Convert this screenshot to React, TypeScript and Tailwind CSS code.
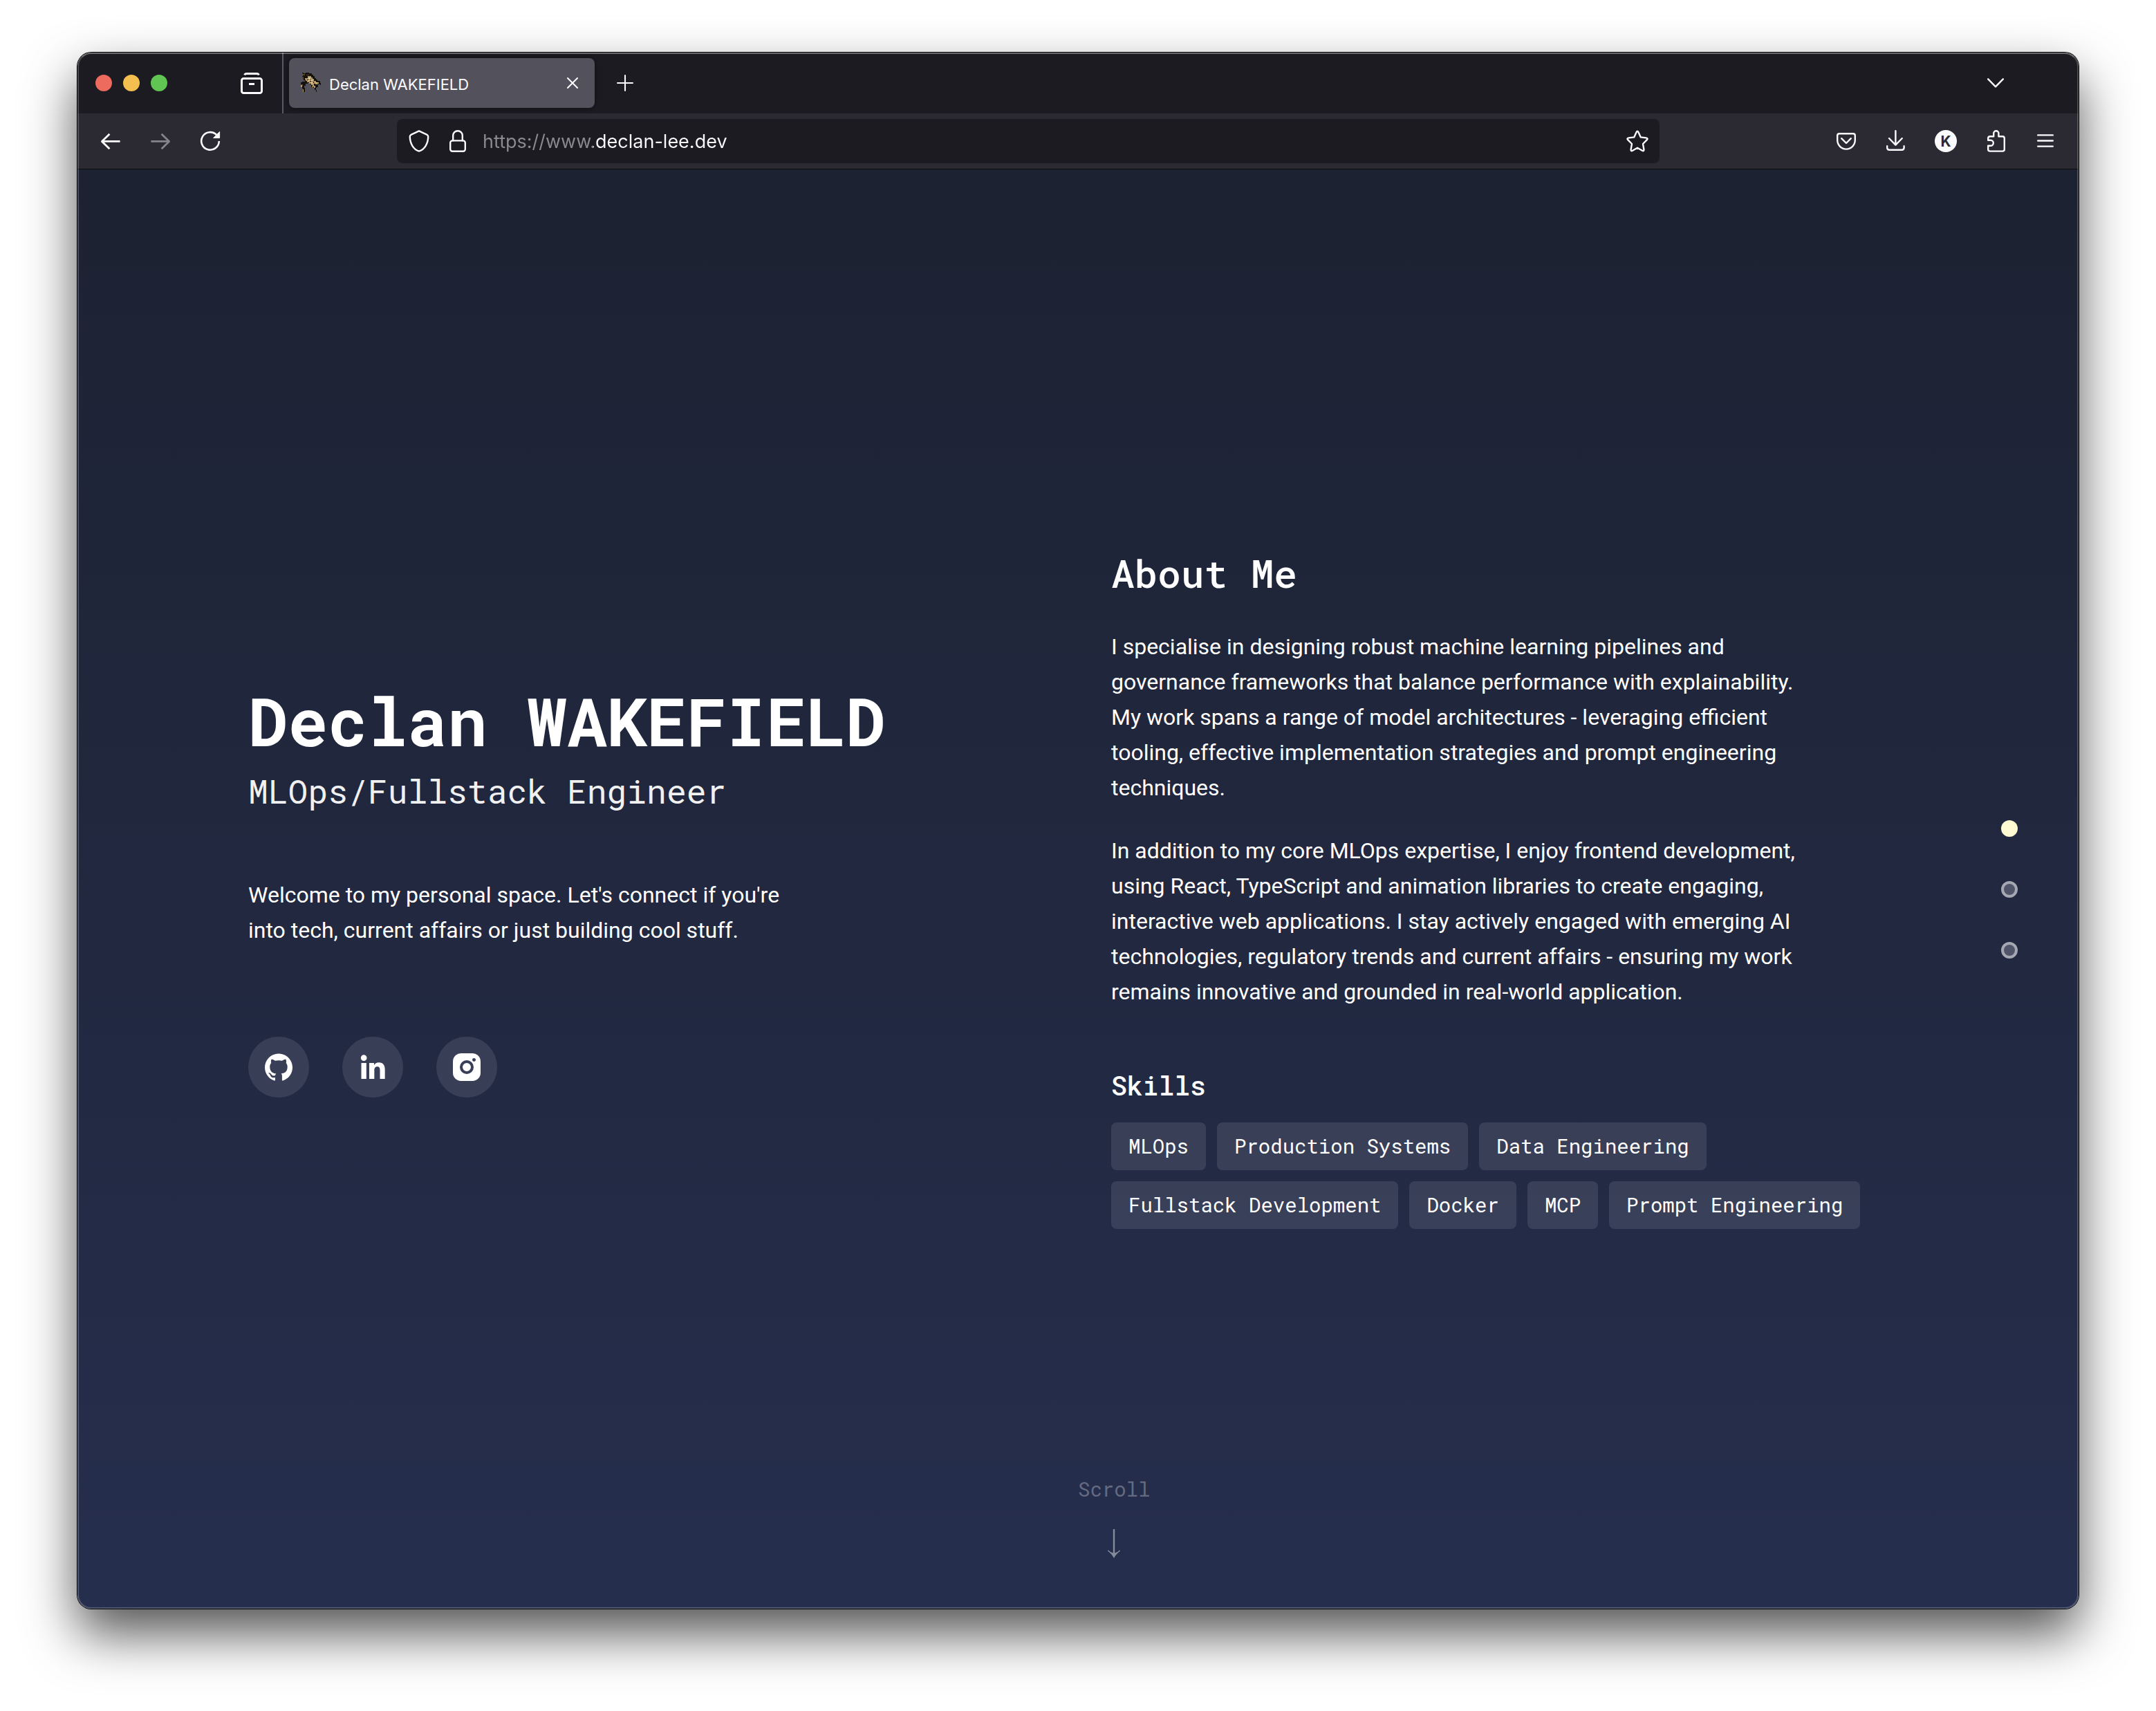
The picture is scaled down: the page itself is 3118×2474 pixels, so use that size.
import type { ReactNode } from "react";

const mono = "font-['Roboto_Mono','DejaVu_Sans_Mono',monospace]";

function Icon({ children, width = 1.2, className = "size-8" }: { children: ReactNode; width?: number; className?: string }) {
  return (
    <svg
      viewBox="0 0 16 16"
      className={className}
      fill="none"
      stroke="currentColor"
      strokeWidth={width}
      strokeLinecap="round"
      strokeLinejoin="round"
      aria-hidden="true"
    >
      {children}
    </svg>
  );
}

function Favicon() {
  return (
    <svg viewBox="0 0 32 32" className="size-8 shrink-0" shapeRendering="crispEdges" aria-hidden="true">
      <path
        fill="#14120c"
        d="M5 1h2v1h3v-1h5v1h4v2h2v2h2v3h2v2h2v2h4v3h2v3h-2v-1h-4v1h1v3h-2v1h-1v3h1v3h-1v-3h-2v-3h-3v-2h-2v-3h-2v-2h-3v1h-3v3h-2v3h1v6h-3v-4h-1v-3h-1v-4h-1v-3h2v-1h4v-2h-2v-2h-2v-4h1v-2h1z"
      />
      <path fill="#5b4526" d="M6 3h3v2h-3zM11 4h4v1h-4zM5 7h2v3h-2zM9 9h3v1h-3zM3 18h3v2h-3zM5 24h1v4h-1zM18 21h3v2h-3z" />
      <path
        fill="#b89a66"
        d="M13 6h5v2h2v2h2v3h3v2h4v2h-2v1h-3v-1h-2v3h2v3h-2v-2h-2v-2h-2v-2h-3v-2h-3v-2h-2v-2h-1v-2h4zM3 19h2v3h-2zM6 25h1v4h-1z"
      />
      <path fill="#e2cf9f" d="M14 8h3v2h-3zM18 11h2v2h-2zM13 12h3v1h-3zM18 15h2v2h-2zM24 15h3v1h-3zM20 20h1v2h-1z" />
      <path fill="#14120c" d="M17 10h1v1h-1zM12 11h2v1h-2zM16 13h2v1h-2zM21 14h1v2h-1z" />
    </svg>
  );
}

function TabBar() {
  return (
    <div className="flex h-22 items-center bg-[#1c1b22] pl-[26px] pr-[108px]">
      <div className="flex gap-4">
        <button aria-label="Close window" className="size-6 rounded-full bg-[#ed6a5e]" />
        <button aria-label="Minimise window" className="size-6 rounded-full bg-[#f5bf4f]" />
        <button aria-label="Zoom window" className="size-6 rounded-full bg-[#61c554]" />
      </div>
      <button aria-label="Firefox View" className="ml-[106px]">
        <Icon width={1.5}>
          <path d="M2.8 2.2Q3.2 1.2 4.3 1.2h7.4q1.1 0 1.5 1" strokeLinecap="butt" />
          <rect x=".75" y="4.75" width="14.5" height="10.5" rx="1.4" />
          <path d="M6 8.75h4" strokeLinecap="butt" />
        </Icon>
      </button>
      <div className="ml-7 h-full w-0.5 bg-[#5b5a63]" />
      <div className="ml-2 flex h-18 w-[442px] items-center gap-3 rounded-lg bg-[#53515c] pl-[14px] pr-6 shadow-[0_0_8px_rgba(0,0,0,0.5)]">
        <Favicon />
        <span className="flex-1 pt-1 text-[22px] leading-8 text-[#fbfbfe]">Declan WAKEFIELD</span>
        <button aria-label="Close tab">
          <Icon width={2} className="size-4">
            <path d="M1 1l14 14M15 1L1 15" />
          </Icon>
        </button>
      </div>
      <button aria-label="New tab" className="ml-8">
        <Icon width={1.4} className="size-6">
          <path d="M8 .7v14.6M.7 8h14.6" />
        </Icon>
      </button>
      <button aria-label="List all tabs" className="ml-auto">
        <Icon width={1.6} className="size-6">
          <path d="M.8 4.2L8 11.6l7.2-7.4" />
        </Icon>
      </button>
    </div>
  );
}

function Toolbar() {
  return (
    <div className="flex h-[81px] items-center border-b border-[#0c0c0d] bg-[#2b2a33] px-8">
      <div className="flex gap-10">
        <button aria-label="Go back">
          <Icon width={1.4}>
            <path d="M14.8 8.2H1.6M7.2 2.9L1.7 8.2l5.5 5.4" strokeLinecap="butt" />
          </Icon>
        </button>
        <button aria-label="Go forward" className="text-[#85848a]" disabled>
          <Icon width={1.4}>
            <path d="M1.2 8.2h13.2M8.8 2.9l5.5 5.3-5.5 5.4" strokeLinecap="butt" />
          </Icon>
        </button>
        <button aria-label="Reload page">
          <Icon width={1.3}>
            <path d="M14.4 8A6.4 6.4 0 1 1 12.6 3.5" strokeLinecap="butt" />
            <path d="M14.8 1.4v4.3h-4.3z" fill="currentColor" strokeWidth=".5" />
          </Icon>
        </button>
      </div>
      <div className="mx-[254px] flex h-16 flex-1 items-center rounded-lg bg-[#1c1b22] px-4">
        <button aria-label="Tracking protection">
          <Icon>
            <path d="M8 .7l5.6 2.6q1 .5 1 1.5c0 4.8-2.5 9.3-6.6 10.5C3.9 14.1 1.4 9.6 1.4 4.8q0-1 1-1.5z" />
          </Icon>
        </button>
        <button aria-label="Site information" className="ml-6">
          <Icon>
            <rect x="2.6" y="7.7" width="10.8" height="7.7" rx="1.5" />
            <path d="M4.6 7.6V4a3.4 3.4 0 0 1 6.8 0v3.6" />
          </Icon>
        </button>
        <input
          aria-label="Address"
          defaultValue="https://www.declan-lee.dev"
          className="ml-5 h-10 min-w-0 flex-1 bg-[linear-gradient(to_right,#8b8a90_160px,#fbfbfe_160px)] bg-clip-text pt-0.5 text-[27px] text-transparent outline-none"
        />
        <button aria-label="Bookmark this page">
          <Icon>
            <path d="M7.3 1.5q.7-1.3 1.4 0l1.7 3.7 4 .5q1.4.3.5 1.4l-2.9 2.9.7 4.1q.1 1.5-1.2.8L8 12.9l-3.5 2q-1.3.7-1.2-.8L4 10 1.1 7.1Q.2 6 1.6 5.7l4-.5z" />
          </Icon>
        </button>
      </div>
      <div className="flex gap-10">
        <button aria-label="Save to Pocket">
          <Icon>
            <path d="M3 2.6h10q1.4 0 1.4 1.4v3.3c0 3.7-2.9 6.5-6.4 6.5S1.6 11 1.6 7.3V4Q1.6 2.6 3 2.6z" />
            <path d="M4.6 6.1L8 9.5l3.4-3.4" />
          </Icon>
        </button>
        <button aria-label="Downloads">
          <Icon>
            <path d="M7.7.6v10M3 6l4.7 4.8L12.4 6M1.6 11.6v1.2q0 1.6 1.6 1.6h9q1.6 0 1.6-1.6v-1.2" />
          </Icon>
        </button>
        <button
          aria-label="Account"
          className="flex size-8 items-center justify-center rounded-full bg-[#fbfbfe] text-[21px] leading-none font-bold text-[#2b2a33]"
        >
          K
        </button>
        <button aria-label="Extensions">
          <Icon>
            <path d="M2.6 7.4V6q0-1.4 1.4-1.4h2.6V2.4a1.8 1.8 0 0 1 3.6 0v2.2H13q1.4 0 1.4 1.4v8q0 1.3-1.4 1.3H4q-1.4 0-1.4-1.3v-2.6h1.8a2 2 0 0 0 0-4z" />
          </Icon>
        </button>
        <button aria-label="Open application menu">
          <Icon>
            <path d="M2.6 3.7h10.8M2.6 7.75h10.8M2.6 11.8h10.8" />
          </Icon>
        </button>
      </div>
    </div>
  );
}

const socials = [
  {
    label: "GitHub",
    path: "M12 .297c-6.63 0-12 5.373-12 12 0 5.303 3.438 9.8 8.205 11.385.6.113.82-.258.82-.577 0-.285-.01-1.04-.015-2.04-3.338.724-4.042-1.61-4.042-1.61C4.422 18.07 3.633 17.7 3.633 17.7c-1.087-.744.084-.729.084-.729 1.205.084 1.838 1.236 1.838 1.236 1.07 1.835 2.809 1.305 3.495.998.108-.776.417-1.305.76-1.605-2.665-.3-5.466-1.332-5.466-5.93 0-1.31.465-2.38 1.235-3.22-.135-.303-.54-1.523.105-3.176 0 0 1.005-.322 3.3 1.23.96-.267 1.98-.399 3-.405 1.02.006 2.04.138 3 .405 2.28-1.552 3.285-1.23 3.285-1.23.645 1.653.24 2.873.12 3.176.765.84 1.23 1.91 1.23 3.22 0 4.61-2.805 5.625-5.475 5.92.42.36.81 1.096.81 2.22 0 1.606-.015 2.896-.015 3.286 0 .315.21.69.825.57C20.565 22.092 24 17.592 24 12.297c0-6.627-5.373-12-12-12",
  },
  {
    label: "LinkedIn",
    path: "M2.1 8.4h4.4v13.8H2.1zM4.3 1.4a2.6 2.6 0 1 1 0 5.2 2.6 2.6 0 0 1 0-5.2zM9 8.4h4.2v1.8c.8-1.3 2.2-2.3 4.1-2.3 4 0 5.3 2.6 5.3 6.3v8h-4.3v-7.4c0-1.8-.3-3.3-2.3-3.3s-2.6 1.5-2.6 3.3v7.4H9z",
  },
  {
    label: "Instagram",
    path: "M7 0h10a7 7 0 0 1 7 7v10a7 7 0 0 1-7 7H7a7 7 0 0 1-7-7V7a7 7 0 0 1 7-7zM12 6a6 6 0 1 0 0 12 6 6 0 0 0 0-12zM12 8.4a3.6 3.6 0 1 1 0 7.2 3.6 3.6 0 0 1 0-7.2zM18.3 4.2a1.5 1.5 0 1 0 0 3 1.5 1.5 0 0 0 0-3z",
  },
];

const skills = [
  "MLOps",
  "Production Systems",
  "Data Engineering",
  "Fullstack Development",
  "Docker",
  "MCP",
  "Prompt Engineering",
];

function Intro() {
  return (
    <div className="flex flex-col">
      <h1 className={`${mono} text-8xl leading-[115px] font-bold whitespace-nowrap`}>Declan WAKEFIELD</h1>
      <p className={`${mono} mt-4 text-5xl leading-[58px] text-[#f0f0f0]`}>MLOps/Fullstack Engineer</p>
      <p className="mt-24 max-w-[800px] text-[32px] leading-[51px]">
        Welcome to my personal space. Let's connect if you're into tech, current affairs or just building cool stuff.
      </p>
      <div className="mt-32 flex gap-12">
        {socials.map((s) => (
          <a
            key={s.label}
            href="#"
            aria-label={s.label}
            className="flex size-22 items-center justify-center rounded-full bg-white/10"
          >
            <svg viewBox="0 0 24 24" className="size-10" fill="currentColor" fillRule="evenodd" aria-hidden="true">
              <path d={s.path} />
            </svg>
          </a>
        ))}
      </div>
    </div>
  );
}

function About() {
  return (
    <div>
      <h2 className={`${mono} text-[56px] leading-[67px] font-medium`}>About Me</h2>
      <div className="mt-12 flex max-w-[1000px] flex-col gap-10 text-[32px] leading-[51px]">
        <p>
          I specialise in designing robust machine learning pipelines and governance frameworks that balance performance
          with explainability. My work spans a range of model architectures - leveraging efficient tooling, effective
          implementation strategies and prompt engineering techniques.
        </p>
        <p>
          In addition to my core MLOps expertise, I enjoy frontend development, using React, TypeScript and animation
          libraries to create engaging, interactive web applications. I stay actively engaged with emerging AI
          technologies, regulatory trends and current affairs - ensuring my work remains innovative and grounded in
          real-world application.
        </p>
      </div>
      <h3 className={`${mono} mt-21 text-[38px] leading-[51px] font-medium`}>Skills</h3>
      <ul className={`${mono} mt-7 flex flex-wrap gap-4 text-[29px] leading-[69px]`}>
        {skills.map((s) => (
          <li key={s} className="rounded-lg bg-white/10 px-[25px]">
            {s}
          </li>
        ))}
      </ul>
    </div>
  );
}

export default function App() {
  return (
    <div className="flex min-h-screen bg-white px-28 pt-[76px] pb-[148px] font-['Inter',sans-serif] text-[#fbfbfe]">
      <div className="relative flex flex-1 flex-col overflow-hidden rounded-[20px] shadow-[0_0_0_1px_#000,0_36px_76px_rgba(0,0,0,0.68)]">
        <TabBar />
        <Toolbar />
        <main className="relative flex flex-1 items-center justify-center bg-linear-to-b from-[#1d2232] to-[#252e4d] font-['Roboto',sans-serif] text-white">
          <div className="grid w-full max-w-[2400px] grid-cols-2 items-center gap-24">
            <Intro />
            <About />
          </div>
          <nav aria-label="Sections" className="absolute right-22 flex flex-col gap-16">
            <button aria-label="About" className="size-6 rounded-full bg-[#fffad1]" />
            <button aria-label="Projects" className="size-6 rounded-full border-4 border-[#a5a8b2] bg-[#50556a]" />
            <button aria-label="Contact" className="size-6 rounded-full border-4 border-[#a5a8b2] bg-[#50556a]" />
          </nav>
          <div className="absolute bottom-[73px] left-1/2 flex flex-col items-center gap-[35px]">
            <span className={`${mono} text-[29px] leading-[46px] text-[#636a81]`}>Scroll</span>
            <svg viewBox="0 0 20 42" className="h-[42px] w-5" fill="#868b9c" aria-hidden="true">
              <path d="M8.8 0h2.4v34.5c2.6-.6 5-2 7-4.2l.8 1.4c-3.7 2.5-6.9 5.8-9 10.3-2.100-4.500-5.300-7.800-9-10.300l.8-1.400c2 2.200 4.400 3.600 7 4.200z" />
            </svg>
          </div>
        </main>
        <div className="pointer-events-none absolute inset-0 rounded-[20px] border-2 border-t-white/35 border-r-white/20 border-b-white/20 border-l-white/20" />
      </div>
    </div>
  );
}
